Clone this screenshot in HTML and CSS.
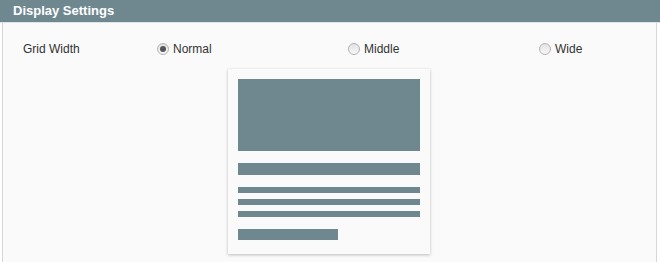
FILE: index.html
```html
<!DOCTYPE html>
<html lang="en">
<head>
    <meta charset="UTF-8">
    <title>Display Settings</title>
    <link rel="stylesheet" href="styles.css">
</head>
<body>
    <div class="panel">
        <div class="panel-header">Display Settings</div>
        <div class="panel-body">
            <div class="setting-row">
                <div class="setting-label">Grid Width</div>
                <label class="option"><input type="radio" name="grid" checked> Normal</label>
                <label class="option"><input type="radio" name="grid"> Middle</label>
                <label class="option"><input type="radio" name="grid"> Wide</label>
            </div>

            <div class="preview">
                <div class="preview-image"></div>
                <div class="preview-title"></div>
                <div class="preview-lines">
                    <div class="preview-line"></div>
                    <div class="preview-line"></div>
                    <div class="preview-line"></div>
                </div>
                <div class="preview-footer"></div>
            </div>
        </div>
    </div>
</body>
</html>
```

FILE: styles.css
```css
* {
    margin: 0;
    padding: 0;
    box-sizing: border-box;
}

html, body {
    height: 262px;
    overflow: hidden;
}

body {
    font-family: 'Liberation Sans', Arial, sans-serif;
    font-size: 12px;
    color: #333;
    background: #fff;
}

.panel {
    width: 660px;
    height: 262px;
    display: flex;
    flex-direction: column;
}

.panel-header {
    background: #6f8890;
    color: #fff;
    font-weight: bold;
    font-size: 13px;
    height: 23px;
    line-height: 22px;
    padding-left: 13px;
    border-bottom: 1px solid #dfe5e7;
}

.panel-body {
    flex: 1;
    margin: 0 3px 0 2px;
    background: #fafafa;
    border-left: 1px solid #d6d6d6;
    border-right: 1px solid #d6d6d6;
    padding-top: 19px;
}

.setting-row {
    display: grid;
    grid-template-columns: 134px 191px 191px 191px;
    align-items: center;
    height: 14px;
    padding-left: 20px;
}

.option {
    display: flex;
    align-items: center;
    gap: 4px;
}

.option input {
    appearance: none;
    -webkit-appearance: none;
    width: 12px;
    height: 12px;
    margin: 0;
    border: 1px solid #b4b4b4;
    border-radius: 50%;
    background: linear-gradient(#e2e2e2, #f8f8f8);
    position: relative;
}

.option input:checked::after {
    content: '';
    position: absolute;
    top: 2px;
    left: 2px;
    width: 6px;
    height: 6px;
    border-radius: 50%;
    background: #555;
}

.preview {
    width: 202px;
    margin: 13px auto 0;
    position: relative;
    left: -1px;
    background: #fafafa;
    padding: 10px 10px 14px;
    box-shadow: 0 1px 3px rgba(0, 0, 0, 0.25);
}

.preview-image {
    height: 72px;
    background: #6f8890;
}

.preview-title {
    height: 12px;
    background: #6f8890;
    margin-top: 12px;
}

.preview-lines {
    display: flex;
    flex-direction: column;
    gap: 6px;
    margin-top: 12px;
}

.preview-line {
    height: 6px;
    background: #6f8890;
}

.preview-footer {
    width: 100px;
    height: 11px;
    background: #6f8890;
    margin-top: 12px;
}
```
